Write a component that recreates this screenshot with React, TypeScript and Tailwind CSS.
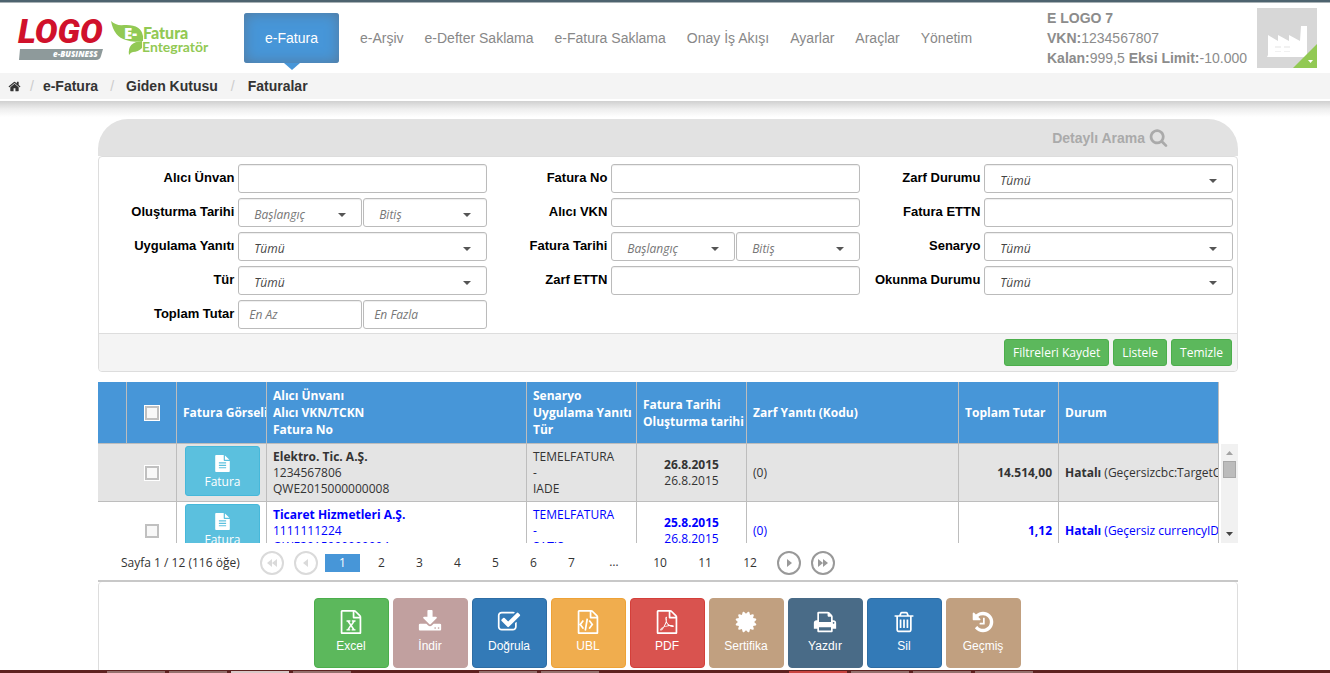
import React from "react";

const ICONS = {
  home: "M1472 992v480q0 26-19 45t-45 19h-384v-384h-256v384h-384q-26 0-45-19t-19-45v-480q0-1 .5-3t.5-3l575-474 575 474q1 2 1 6zm223-69l-62 74q-8 9-21 11h-3q-13 0-21-7l-692-577-692 577q-12 8-24 7-13-2-21-11l-62-74q-8-10-7-23.5t11-21.5l719-599q32-26 76-26t76 26l244 204v-195q0-14 9-23t23-9h192q14 0 23 9t9 23v408l219 182q10 8 11 21.5t-7 23.5z",
  search:
    "M1216 832q0-185-131.5-316.5t-316.5-131.5-316.5 131.5-131.5 316.5 131.5 316.5 316.5 131.5 316.5-131.5 131.5-316.5zm512 832q0 52-38 90t-90 38q-54 0-90-38l-343-342q-179 124-399 124-143 0-273.5-55.5t-225-150-150-225-55.5-273.5 55.5-273.5 150-225 225-150 273.5-55.5 273.5 55.5 225 150 150 225 55.5 273.5q0 220-124 399l343 343q37 37 37 90z",
  fileText:
    "M1596 476q14 14 28 36h-472v-472q22 14 36 28zm-476 164h544v1056q0 40-28 68t-68 28h-1344q-40 0-68-28t-28-68v-1600q0-40 28-68t68-28h800v544q0 40 28 68t68 28zm160 736v-64q0-14-9-23t-23-9h-704q-14 0-23 9t-9 23v64q0 14 9 23t23 9h704q14 0 23-9t9-23zm0-256v-64q0-14-9-23t-23-9h-704q-14 0-23 9t-9 23v64q0 14 9 23t23 9h704q14 0 23-9t9-23zm0-256v-64q0-14-9-23t-23-9h-704q-14 0-23 9t-9 23v64q0 14 9 23t23 9h704q14 0 23-9t9-23z",
  excel:
    "M1596 380q28 28 48 76t20 88v1152q0 40-28 68t-68 28h-1344q-40 0-68-28t-28-68v-1600q0-40 28-68t68-28h896q40 0 88 20t76 48zm-444-244v376h376q-10-29-22-41l-313-313q-12-12-41-22zm384 1528v-1024h-416q-40 0-68-28t-28-68v-416h-768v1536h1280zm-979-234v106h281v-106h-75l103-161q5-7 10-16.5t7.5-13.5 3.5-4h2q1 4 5 10 2 4 4.5 7.5t6 8 6.5 8.5l107 161h-76v106h291v-106h-68l-192-273 195-282h67v-107h-279v107h74l-103 159q-4 7-10 16.5t-9 13.5l-2 3h-2q-1-4-5-10-6-11-17-23l-106-159h76v-107h-290v107h68l189 272-194 283h-68z",
  code: "M1596 380q28 28 48 76t20 88v1152q0 40-28 68t-68 28h-1344q-40 0-68-28t-28-68v-1600q0-40 28-68t68-28h896q40 0 88 20t76 48zm-444-244v376h376q-10-29-22-41l-313-313q-12-12-41-22zm384 1528v-1024h-416q-40 0-68-28t-28-68v-416h-768v1536h1280zm-1056-896q8-11 21-12.5t24 6.5l51 38q11 8 12.5 21t-6.5 24l-182 243 182 243q8 11 6.5 24t-12.5 21l-51 38q-11 8-24 6.5t-21-12.5l-226-301q-14-19 0-38zm802 301q14 19 0 38l-226 301q-8 11-21 12.5t-24-6.5l-51-38q-11-8-12.5-21t6.5-24l182-243-182-243q-8-11-6.5-24t12.5-21l51-38q11-8 24-6.5t21 12.5zm-620 461q-13-2-20.5-13t-5.5-24l138-831q2-13 13-20.5t24-5.5l63 10q13 2 20.5 13t5.5 24l-138 831q-2 13-13 20.5t-24 5.5z",
  pdf: "M1596 380q28 28 48 76t20 88v1152q0 40-28 68t-68 28h-1344q-40 0-68-28t-28-68v-1600q0-40 28-68t68-28h896q40 0 88 20t76 48zm-444-244v376h376q-10-29-22-41l-313-313q-12-12-41-22zm384 1528v-1024h-416q-40 0-68-28t-28-68v-416h-768v1536h1280zm-514-593q33 26 84 56 59-7 117-7 147 0 177 49 16 22 2 52 0 1-1 2l-2 2v1q-6 38-71 38-48 0-115-20t-130-53q-221 24-392 83-153 262-242 262-15 0-28-7l-24-12q-1-1-6-5-10-10-6-36 9-40 56-91.5t132-96.5q14-9 23 6 2 2 2 4 52-85 107-197 68-136 104-262-24-82-30.5-159.5t6.5-127.5q11-40 42-40h22q23 0 35 15 18 21 9 68-2 6-4 8 1 3 1 8v30q-2 123-14 192 55 164 146 238zm-576 411q52-24 137-158-51 40-87.5 84t-49.5 74zm398-920q-15 42-2 132 1-7 7-44 0-3 7-43 1-4 4-8-1-1-1-2-1-2-1-3-1-22-13-36 0 1-1 2v2zm-124 661q135-54 284-81-2-1-13-9.5t-16-13.5q-76-67-127-176-27 86-83 197-30 56-45 83zm646-16q-24-24-140-24 76 28 124 28 14 0 18-1 0-1-2-3z",
  download:
    "M1344 1344q0-26-19-45t-45-19-45 19-19 45 19 45 45 19 45-19 19-45zm256 0q0-26-19-45t-45-19-45 19-19 45 19 45 45 19 45-19 19-45zm128-224v320q0 40-28 68t-68 28h-1472q-40 0-68-28t-28-68v-320q0-40 28-68t68-28h465l135 136q58 56 136 56t136-56l136-136h464q40 0 68 28t28 68zm-325-569q17 41-14 70l-448 448q-18 19-45 19t-45-19l-448-448q-31-29-14-70 17-39 59-39h256v-448q0-26 19-45t45-19h256q26 0 45 19t19 45v448h256q42 0 59 39z",
  check:
    "M1472 930v318q0 119-84.5 203.5t-203.5 84.5h-832q-119 0-203.5-84.5t-84.5-203.5v-832q0-119 84.5-203.5t203.5-84.5h832q63 0 117 25 15 7 18 23 3 17-9 29l-49 49q-10 10-23 10-3 0-9-2-23-6-45-6h-832q-66 0-113 47t-47 113v832q0 66 47 113t113 47h832q66 0 113-47t47-113v-254q0-13 9-22l64-64q10-10 23-10 6 0 12 3 20 8 20 29zm231-489l-814 814q-24 24-57 24t-57-24l-430-430q-24-24-24-57t24-57l110-110q24-24 57-24t57 24l263 263 647-647q24-24 57-24t57 24l110 110q24 24 24 57t-24 57z",
  certificate:
    "M1504 896l138 135q30 28 20 70-12 41-52 51l-188 48 53 186q12 41-19 70-29 31-70 19l-186-53-48 188q-10 40-51 52-12 2-19 2-31 0-51-22l-135-138-135 138q-28 30-70 20-41-11-51-52l-48-188-186 53q-41 12-70-19-31-29-19-70l53-186-188-48q-40-10-52-51-10-42 20-70l138-135-138-135q-30-28-20-70 12-41 52-51l188-48-53-186q-12-41 19-70 29-31 70-19l186 53 48-188q10-41 51-51 41-12 70 19l135 139 135-139q29-30 70-19 41 10 51 51l48 188 186-53q41-12 70 19 31 29 19 70l-53 186 188 48q40 10 52 51 10 42-20 70z",
  print:
    "M448 1536h896v-256h-896v256zm0-640h896v-384h-160q-40 0-68-28t-28-68v-160h-640v640zm1152 64q0-26-19-45t-45-19-45 19-19 45 19 45 45 19 45-19 19-45zm128 0v416q0 13-9.5 22.5t-22.5 9.5h-224v160q0 40-28 68t-68 28h-960q-40 0-68-28t-28-68v-160h-224q-13 0-22.5-9.5t-9.5-22.5v-416q0-79 56.5-135.5t135.5-56.5h64v-544q0-40 28-68t68-28h672q40 0 88 20t76 48l152 152q28 28 48 76t20 88v256h64q79 0 135.5 56.5t56.5 135.5z",
  trash:
    "M704 736v576q0 14-9 23t-23 9h-64q-14 0-23-9t-9-23v-576q0-14 9-23t23-9h64q14 0 23 9t9 23zm256 0v576q0 14-9 23t-23 9h-64q-14 0-23-9t-9-23v-576q0-14 9-23t23-9h64q14 0 23 9t9 23zm256 0v576q0 14-9 23t-23 9h-64q-14 0-23-9t-9-23v-576q0-14 9-23t23-9h64q14 0 23 9t9 23zm128 724v-948h-896v948q0 22 7 40.5t14.5 27 10.5 8.5h832q3 0 10.5-8.5t14.5-27 7-40.5zm-672-1076h448l-48-117q-7-9-17-11h-317q-10 2-17 11zm928 32v64q0 14-9 23t-23 9h-96v948q0 83-47 143.5t-113 60.5h-832q-66 0-113-58.5t-47-141.5v-952h-96q-14 0-23-9t-9-23v-64q0-14 9-23t23-9h309l70-167q15-37 54-63t79-26h320q40 0 79 26t54 63l70 167h309q14 0 23 9t9 23z",
  history:
    "M1664 896q0 156-61 298t-164 245-245 164-298 61q-172 0-327-72.5t-264-204.5q-7-10-6.5-22.5t8.5-20.5l137-138q10-9 25-9 16 2 23 12 73 95 179 147t225 52q104 0 198.5-40.5t163.5-109.5 109.5-163.5 40.5-198.5-40.5-198.5-109.5-163.5-163.5-109.5-198.5-40.5q-98 0-188 35.5t-160 101.5l137 138q31 30 14 69-17 40-59 40h-448q-26 0-45-19t-19-45v-448q0-42 40-59 39-17 69 14l130 129q107-101 244.5-156.5t284.5-55.5q156 0 298 61t245 164 164 245 61 298zm-640-288v448q0 14-9 23t-23 9h-320q-14 0-23-9t-9-23v-64q0-14 9-23t23-9h224v-352q0-14 9-23t23-9h64q14 0 23 9t9 23z",
};

function Icon({ name, className }: { name: keyof typeof ICONS; className: string }) {
  return (
    <svg viewBox="0 0 1792 1792" fill="currentColor" aria-hidden="true" className={className}>
      <path d={ICONS[name]} />
    </svg>
  );
}

function Brand() {
  return (
    <a href="#" aria-label="Logo e-Business" className="block shrink-0">
      <svg width="212" height="56" viewBox="0 0 212 56" className="block">
        <text x="18" y="33" fill="#d0112b" fontSize="34" fontWeight="900" fontStyle="italic" fontFamily="Roboto, sans-serif">
          LOGO
        </text>
        <path d="M20 39h83l-2 7q-1 4-5 4H19z" fill="#8e9a9b" />
        <text x="53" y="47" fill="#fff" fontSize="8" fontWeight="800" fontStyle="italic" fontFamily="'Open Sans', sans-serif">
          e-BUSINESS
        </text>
        <path d="M111 11q5 5 13 4 17-1 19 11v5q-10 2-17-1-12-3-15-19z" fill="#92c954" />
        <path d="M129 45q-2-13 13-14v7q-4 4-9 4-2 0-4 3z" fill="#92c954" />
        <text x="124" y="29" fill="#fff" fontSize="15" fontWeight="800" fontFamily="'Open Sans', sans-serif">
          E-
        </text>
        <text x="143" y="29" fill="#92c954" fontSize="16" fontWeight="900" fontFamily="Lato, sans-serif">
          Fatura
        </text>
        <text x="142" y="42" fill="#92c954" fontSize="14" fontWeight="700" fontFamily="Lato, sans-serif">
          Entegratör
        </text>
      </svg>
    </a>
  );
}

const NAV = ["e-Arşiv", "e-Defter Saklama", "e-Fatura Saklama", "Onay İş Akışı", "Ayarlar", "Araçlar", "Yönetim"];

function Header() {
  return (
    <header className="flex h-[73px] shrink-0 items-start border-t-2 border-[#4d636f] bg-white shadow-[inset_0_1px_0_#a9b2b6]">
      <div className="w-[244px] shrink-0 pt-2">
        <Brand />
      </div>
      <nav className="flex items-center gap-[21px] pt-[11px] text-sm whitespace-nowrap text-[#888]">
        <a
          href="#"
          className="relative flex h-[50px] w-[95px] items-center justify-center rounded-[3px] bg-[#4796d8] text-white shadow-[inset_0_0_14px_#55799b]"
        >
          e-Fatura
          <svg width="16" height="8" viewBox="0 0 16 8" className="absolute top-full left-10" aria-hidden="true">
            <path d="M0 0h16l-8 7z" fill="#4796d8" />
          </svg>
        </a>
        {NAV.map((n) => (
          <a key={n} href="#">
            {n}
          </a>
        ))}
      </nav>
      <div className="ml-auto flex gap-2 pt-[6px] pr-[13px] text-sm leading-5 whitespace-nowrap text-[#8c8c8c]">
        <div className="pr-[2px]">
          <p className="font-bold">E LOGO 7</p>
          <p>
            <b>VKN:</b>1234567807
          </p>
          <p>
            <b>Kalan:</b>999,5 <b>Eksi Limit:</b>-10.000
          </p>
        </div>
        <button type="button" aria-label="Firma menüsü" className="size-[60px]">
          <svg width="60" height="60" viewBox="0 0 60 60">
            <path d="M0 0h60v60H0z" fill="#d7d7d7" />
            <path d="M10 49l1-2V27l10 6v-6l11 6v-6l11 6 1-15h6v31z" fill="#fff" />
            <path d="M18 38h6v2h-6zM27 38h6v2h-6zM18 43h6v1h-6zM27 43h6v1h-6z" fill="#f1f1f1" />
            <path d="M60 36v24H36z" fill="#92c954" />
            <path d="M51 52h5l-2.500 3z" fill="#fff" />
          </svg>
        </button>
      </div>
    </header>
  );
}

function Breadcrumb() {
  return (
    <div className="shrink-0">
      <ol className="flex h-[26px] items-center bg-[#f4f4f4] pl-2 text-sm font-bold text-[#333]">
        <li>
          <a href="#" aria-label="Ana sayfa">
            <Icon name="home" className="size-[13px]" />
          </a>
        </li>
        <li className="flex">
          <span className="px-[9px] font-normal text-[#ccc]">/</span>
          <a href="#">e-Fatura</a>
        </li>
        <li className="flex">
          <span className="px-3 font-normal text-[#ccc]">/</span>
          <a href="#">Giden Kutusu</a>
        </li>
        <li className="flex">
          <span className="px-[13px] font-normal text-[#ccc]">/</span>
          <a href="#">Faturalar</a>
        </li>
      </ol>
      <div className="mt-[2px] h-4 bg-linear-to-b from-[#d0d0d0] via-[#eeeeee] to-white" />
    </div>
  );
}

function TextField({ id, placeholder }: { id: string; placeholder?: string }) {
  return (
    <input
      id={id}
      aria-label={placeholder}
      placeholder={placeholder}
      className="h-[29px] w-full min-w-0 rounded-[3px] border border-[#bbb] bg-white px-[10px] text-xs text-[#444] italic shadow-[inset_0_1px_1px_#eee] placeholder:text-[#777]"
    />
  );
}

function SelectField({ id, value, muted }: { id: string; value: string; muted?: boolean }) {
  return (
    <div className="relative w-full min-w-0">
      <select
        id={id}
        aria-label={muted ? value : undefined}
        className={
          "block h-[29px] w-full appearance-none rounded-[3px] border border-[#bbb] bg-white pt-1 pr-6 pl-[15px] text-xs italic shadow-[inset_0_1px_1px_#eee] " +
          (muted ? "text-[#777]" : "text-[#444]")
        }
      >
        <option>{value}</option>
      </select>
      <svg width="8" height="4" viewBox="0 0 8 4" className="pointer-events-none absolute top-[15px] right-4" aria-hidden="true">
        <path d="M0 0h8L4 4z" fill="#555" />
      </svg>
    </div>
  );
}

type Field = { label: string; id: string; kind: "text" | "select" | "dates" | "range" };

const FIELDS: Field[][] = [
  [
    { label: "Alıcı Ünvan", id: "unvan", kind: "text" },
    { label: "Oluşturma Tarihi", id: "olusturma", kind: "dates" },
    { label: "Uygulama Yanıtı", id: "yanit", kind: "select" },
    { label: "Tür", id: "tur", kind: "select" },
    { label: "Toplam Tutar", id: "tutar", kind: "range" },
  ],
  [
    { label: "Fatura No", id: "no", kind: "text" },
    { label: "Alıcı VKN", id: "vkn", kind: "text" },
    { label: "Fatura Tarihi", id: "tarih", kind: "dates" },
    { label: "Zarf ETTN", id: "zettn", kind: "text" },
  ],
  [
    { label: "Zarf Durumu", id: "zdurum", kind: "select" },
    { label: "Fatura ETTN", id: "fettn", kind: "text" },
    { label: "Senaryo", id: "senaryo", kind: "select" },
    { label: "Okunma Durumu", id: "okunma", kind: "select" },
  ],
];

function Filters() {
  return (
    <form className="shrink-0">
      <div className="flex h-[37px] items-center justify-end gap-1 rounded-t-[30px] bg-[#e2e2e2] pr-[70px] text-sm font-bold text-[#aaa]">
        Detaylı Arama
        <Icon name="search" className="size-[19px]" />
      </div>
      <div className="rounded-[4px] border border-[#ddd] bg-white">
        <div className="grid grid-cols-3 pt-[7px] pr-1 pb-1 pl-[15px]">
          {FIELDS.map((col, i) => (
            <div key={i} className="flex flex-col gap-[5px]">
              {col.map((f) => (
                <div key={f.id} className="flex">
                  <label htmlFor={f.id} className="flex-1 pt-1 pr-1 text-right text-[13px] leading-5 font-bold whitespace-nowrap text-black">
                    {f.label}
                  </label>
                  <div className="flex w-2/3 gap-px font-['Open_Sans',sans-serif]">
                    {f.kind === "text" && <TextField id={f.id} />}
                    {f.kind === "select" && <SelectField id={f.id} value="Tümü" />}
                    {f.kind === "dates" && (
                      <>
                        <SelectField id={f.id} value="Başlangıç" muted />
                        <SelectField id={f.id + "-son"} value="Bitiş" muted />
                      </>
                    )}
                    {f.kind === "range" && (
                      <>
                        <TextField id={f.id} placeholder="En Az" />
                        <TextField id={f.id + "-max"} placeholder="En Fazla" />
                      </>
                    )}
                  </div>
                </div>
              ))}
            </div>
          ))}
        </div>
        <div className="flex h-[38px] items-center justify-end gap-1 rounded-b-[4px] border-t border-[#ddd] bg-[#f4f4f4] pr-[5px] font-['Open_Sans',sans-serif] text-xs text-white">
          {["Filtreleri Kaydet", "Listele", "Temizle"].map((b) => (
            <button key={b} type="button" className="h-[27px] rounded-[3px] border border-[#4cae4c] bg-[#5cb85c] px-2">
              {b}
            </button>
          ))}
        </div>
      </div>
    </form>
  );
}

function Check({ label }: { label: string }) {
  return (
    <input
      type="checkbox"
      aria-label={label}
      className="mx-auto block size-[14px] appearance-none border-2 border-[#c0c0c0] bg-[#f8f8f8] outline-1 outline-white"
    />
  );
}

const ROWS = [
  {
    tone: "bg-[#e4e4e4] text-[#333]",
    name: "Elektro. Tic. A.Ş.",
    vkn: "1234567806",
    no: "QWE2015000000008",
    type: "IADE",
    date: "26.8.2015",
    total: "14.514,00",
    status: "(Geçersizcbc:TargetCurrencyCode)",
  },
  {
    tone: "bg-white text-[#0000ff]",
    name: "Ticaret Hizmetleri A.Ş.",
    vkn: "1111111224",
    no: "QWE2015000000004",
    type: "SATIS",
    date: "25.8.2015",
    total: "1,12",
    status: "(Geçersiz currencyID niteliği)",
  },
];

const HEAD = "h-[62px] overflow-hidden border-r border-b border-[#bdbdbd] pr-[5px] pl-[6px] text-left font-bold leading-[17px]";
const CELL = "h-[58px] overflow-hidden border-r border-b border-[#bdbdbd] px-[6px] leading-4";

function Invoices() {
  return (
    <div className="mt-[10px] flex h-[161px] shrink-0 overflow-hidden font-['Open_Sans',sans-serif] text-xs">
      <div className="min-w-0 flex-1">
        <table className="w-full table-fixed border-separate border-spacing-0 whitespace-nowrap">
          <colgroup>
            <col className="w-[29px]" />
            <col className="w-[50px]" />
            <col className="w-[90px]" />
            <col className="w-[260px]" />
            <col className="w-[110px]" />
            <col className="w-[110px]" />
            <col className="w-[212px]" />
            <col className="w-[100px]" />
            <col />
          </colgroup>
          <thead className="bg-[#4796d8] text-white">
            <tr>
              <th className={HEAD} />
              <th className={HEAD}>
                <Check label="Tümünü seç" />
              </th>
              <th className={HEAD}>Fatura Görseli</th>
              <th className={HEAD}>
                Alıcı Ünvanı
                <br />
                Alıcı VKN/TCKN
                <br />
                Fatura No
              </th>
              <th className={HEAD}>
                Senaryo
                <br />
                Uygulama Yanıtı
                <br />
                Tür
              </th>
              <th className={HEAD}>
                Fatura Tarihi
                <br />
                Oluşturma tarihi
              </th>
              <th className={HEAD}>Zarf Yanıtı (Kodu)</th>
              <th className={HEAD}>Toplam Tutar</th>
              <th className={HEAD}>Durum</th>
            </tr>
          </thead>
          <tbody>
            {ROWS.map((r) => (
              <tr key={r.vkn} className={r.tone}>
                <td className="border-b border-[#bdbdbd]" />
                <td className={CELL}>
                  <Check label={r.name} />
                </td>
                <td className="border-r border-b border-[#bdbdbd] pb-1 pl-2">
                  <button
                    type="button"
                    className="flex h-[50px] w-[75px] flex-col items-center justify-end gap-[2px] rounded-[3px] border border-[#46b8da] bg-[#5bc0de] pb-[5px] text-white"
                  >
                    <Icon name="fileText" className="size-[17px]" />
                    <span className="leading-4">Fatura</span>
                  </button>
                </td>
                <td className={CELL}>
                  <b>{r.name}</b>
                  <br />
                  {r.vkn}
                  <br />
                  {r.no}
                </td>
                <td className={CELL}>
                  TEMELFATURA
                  <br />-<br />
                  {r.type}
                </td>
                <td className={CELL + " text-center"}>
                  <b>{r.date}</b>
                  <br />
                  26.8.2015
                </td>
                <td className={CELL}>(0)</td>
                <td className={CELL + " text-right font-bold"}>{r.total}</td>
                <td className={CELL}>
                  <b>Hatalı</b> {r.status}
                </td>
              </tr>
            ))}
          </tbody>
        </table>
      </div>
      <div className="mt-[62px] ml-[2px] flex w-[17px] flex-col items-center bg-[#f1f1f1] py-[7px]">
        <svg width="7" height="4" viewBox="0 0 7 4" aria-hidden="true">
          <path d="M0 4h7L3.500 0z" fill="#a3a3a3" />
        </svg>
        <div className="mt-[6px] h-[17px] w-[13px] border border-[#a8a8a8] bg-[#bcbcbc]" />
        <svg width="7" height="4" viewBox="0 0 7 4" className="mt-auto" aria-hidden="true">
          <path d="M0 0h7L3.500 4z" fill="#444" />
        </svg>
      </div>
    </div>
  );
}

function RoundButton({ label, path, tone }: { label: string; path: string; tone: string }) {
  return (
    <button type="button" aria-label={label} className={"mx-[5px] " + tone}>
      <svg width="24" height="24" viewBox="0 0 24 24" className="block">
        <circle cx="12" cy="12" r="11" fill="none" stroke="currentColor" strokeWidth="2" />
        <path d={path} fill="currentColor" />
      </svg>
    </button>
  );
}

function Pager() {
  return (
    <div className="flex h-[39px] shrink-0 items-center border-b-2 border-[#c8c8c8] pt-[2px] pl-[23px] font-['Open_Sans',sans-serif] text-xs text-[#333]">
      <span className="w-[134px] whitespace-nowrap">Sayfa 1 / 12 (116 öğe)</span>
      <div className="flex items-center">
        <RoundButton label="İlk" path="M12 8v8l-5-4zM17 8v8l-5-4z" tone="text-[#dadada]" />
        <RoundButton label="Önceki" path="M14 8v8l-5-4z" tone="text-[#dadada]" />
      </div>
      <div className="ml-[2px] flex gap-[3px]">
        <button type="button" className="mr-px h-[18px] w-[35px] bg-[#4796d8] text-white">
          1
        </button>
        {["2", "3", "4", "5", "6", "7"].map((n) => (
          <button key={n} type="button" className="h-[18px] w-[35px]">
            {n}
          </button>
        ))}
        <span className="w-[44px] text-center">…</span>
        {["10", "11", "12"].map((n) => (
          <button key={n} type="button" className="h-[18px] w-[42px]">
            {n}
          </button>
        ))}
      </div>
      <div className="ml-px flex items-center">
        <RoundButton label="Sonraki" path="M10 8v8l5-4z" tone="text-[#999]" />
        <RoundButton label="Son" path="M7 8v8l5-4zM12 8v8l5-4z" tone="text-[#999]" />
      </div>
    </div>
  );
}

const ACTIONS: { label: string; icon: keyof typeof ICONS; tone: string }[] = [
  { label: "Excel", icon: "excel", tone: "bg-[#5cb85c] border-[#4cae4c]" },
  { label: "İndir", icon: "download", tone: "bg-[#c1a09f] border-[#c1a09f]" },
  { label: "Doğrula", icon: "check", tone: "bg-[#337ab7] border-[#2e6da4]" },
  { label: "UBL", icon: "code", tone: "bg-[#f0ad4e] border-[#eea236]" },
  { label: "PDF", icon: "pdf", tone: "bg-[#d9534f] border-[#d43f3a]" },
  { label: "Sertifika", icon: "certificate", tone: "bg-[#c1a080] border-[#c1a080]" },
  { label: "Yazdır", icon: "print", tone: "bg-[#496b87] border-[#496b87]" },
  { label: "Sil", icon: "trash", tone: "bg-[#337ab7] border-[#2e6da4]" },
  { label: "Geçmiş", icon: "history", tone: "bg-[#c1a080] border-[#c1a080]" },
];

const TASKBAR = [
  "bg-[#94706d]",
  "bg-[#94706d]",
  "bg-[#d8c8c7]",
  "bg-[#94706d]",
  "bg-transparent",
  "bg-transparent",
  "bg-[#94706d]",
  "bg-[#94706d]",
  "bg-transparent",
  "bg-transparent",
  "bg-transparent",
  "bg-[#c94440]",
  "bg-[#94706d]",
  "bg-[#94706d]",
  "bg-[#94706d]",
];

export default function App() {
  return (
    <div className="flex h-screen flex-col overflow-hidden bg-white font-['Liberation_Sans',Arial,sans-serif]">
      <Header />
      <Breadcrumb />
      <main className="flex min-h-0 flex-1 flex-col overflow-hidden pt-[2px] pl-[6px]">
        <div className="mx-auto flex min-h-0 w-full max-w-[1140px] flex-1 flex-col">
          <Filters />
          <Invoices />
          <Pager />
          <div className="flex flex-1 justify-center gap-1 rounded-t-[4px] border-x border-[#ddd] pt-4 pr-[2px]">
            {ACTIONS.map((a) => (
              <button
                key={a.label}
                type="button"
                className={"flex h-[70px] w-[75px] flex-col items-center rounded-[4px] border pt-[11px] text-xs text-white " + a.tone}
              >
                <Icon name={a.icon} className="size-6" />
                <span className="mt-1 leading-4">{a.label}</span>
              </button>
            ))}
          </div>
        </div>
      </main>
      <div className="flex h-[3px] shrink-0 items-end gap-1 bg-[#5e2220] pl-[107px]">
        {TASKBAR.map((t, i) => (
          <div key={i} className={"h-[2px] w-[58px] " + t} />
        ))}
      </div>
    </div>
  );
}
